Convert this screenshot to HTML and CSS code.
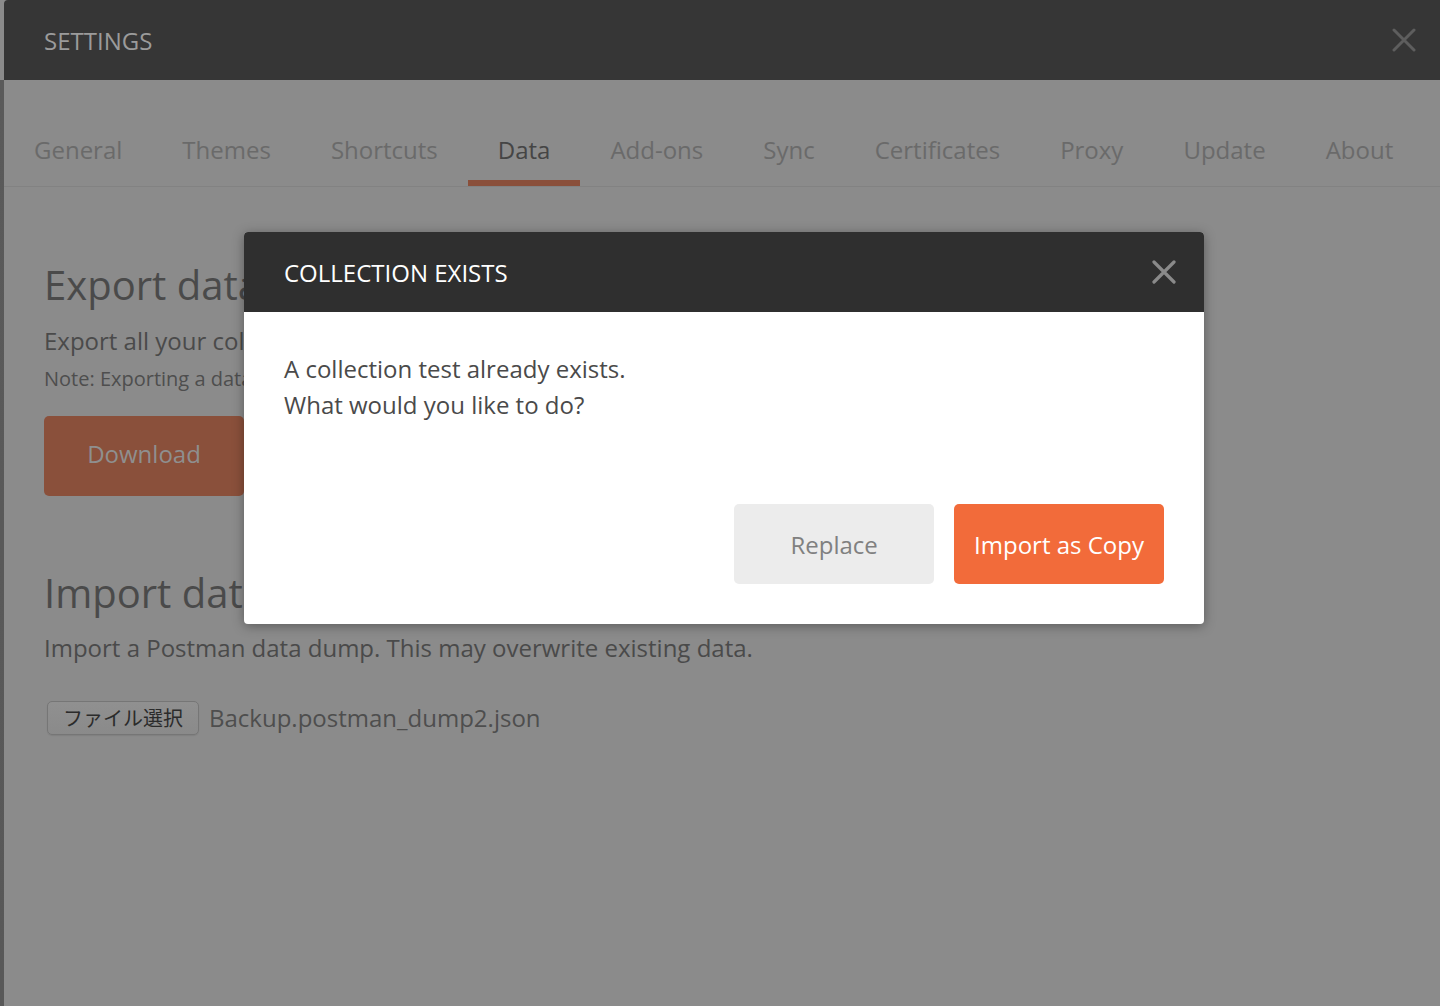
FILE: index.html
```html
<!DOCTYPE html>
<html lang="ja">
<head>
<meta charset="utf-8">
<title>Settings</title>
<link rel="stylesheet" href="styles.css">
</head>
<body>
<div class="app">
  <div class="edge"></div>
  <section class="settings">
    <header class="settings-header">
      <span class="settings-title">SETTINGS</span>
      <svg class="close-icon" width="24" height="24" viewBox="0 0 24 24"><path d="M2 2L22 22M22 2L2 22" stroke="#5e5e5e" stroke-width="3" stroke-linecap="round" fill="none"/></svg>
    </header>
    <nav class="tabs">
      <span class="tab">General</span>
      <span class="tab">Themes</span>
      <span class="tab">Shortcuts</span>
      <span class="tab active">Data</span>
      <span class="tab">Add-ons</span>
      <span class="tab">Sync</span>
      <span class="tab">Certificates</span>
      <span class="tab">Proxy</span>
      <span class="tab">Update</span>
      <span class="tab">About</span>
    </nav>
    <div class="content">
      <h2 class="section-title">Export data</h2>
      <p class="section-text">Export all your collections, environments, globals and header presets to a single file.</p>
      <p class="section-note">Note: Exporting a data dump may take a while depending on the amount of data.</p>
      <div class="dl-btn">Download</div>
      <h2 class="section-title import-title">Import data</h2>
      <p class="section-text import-text">Import a Postman data dump. This may overwrite existing data.</p>
      <div class="file-row">
        <span class="file-btn">ファイル選択</span>
        <span class="file-name">Backup.postman_dump2.json</span>
      </div>
    </div>
  </section>
</div>

<div class="dialog">
  <div class="dialog-header">
    <span class="dialog-title">COLLECTION EXISTS</span>
    <svg class="dialog-close" width="24" height="24" viewBox="0 0 24 24"><path d="M2 2L22 22M22 2L2 22" stroke="#8a8a8a" stroke-width="3.2" stroke-linecap="round" fill="none"/></svg>
  </div>
  <div class="dialog-body">
    <p class="dialog-text">A collection test already exists.<br>What would you like to do?</p>
    <div class="dialog-actions">
      <span class="btn btn-secondary">Replace</span>
      <span class="btn btn-primary">Import as Copy</span>
    </div>
  </div>
</div>
</body>
</html>
```

FILE: styles.css
```css
* { box-sizing: border-box; }
html, body {
  margin: 0;
  padding: 0;
  width: 1440px;
  height: 1006px;
  overflow: hidden;
}
body {
  font-family: "Open Sans", "Noto Sans", sans-serif;
  background: #8b8b8b;
}
.app {
  display: flex;
  height: 1006px;
}
.edge {
  width: 4px;
  flex: none;
  background: linear-gradient(#8b8b8b 0, #8b8b8b 80px, #5a5a5a 80px, #585858 100%);
}
.settings {
  flex: 1;
  background: #8b8b8b;
  display: flex;
  flex-direction: column;
}
.settings-header {
  height: 80px;
  flex: none;
  background: #363636;
  border-top-left-radius: 4px;
  display: flex;
  align-items: center;
  justify-content: space-between;
  padding: 0 24px 0 40px;
}
.settings-title {
  color: #9b9b9b;
  font-size: 24px;
  line-height: 36px;
  margin-top: 2px;
}
.close-icon { display: block; }
.tabs {
  display: flex;
  margin-top: 52px;
  border-bottom: 1px solid #828282;
}
.tab {
  padding: 0 30px 12px;
  font-size: 24px;
  line-height: 36px;
  color: #6a6a6a;
  border-bottom: 6px solid transparent;
}
.tab.active {
  color: #454545;
  border-bottom-color: #8a4f3a;
}
.content {
  padding: 0 40px;
}
.section-title {
  margin: 71px 0 0;
  font-size: 40px;
  line-height: 54px;
  font-weight: 400;
  color: #4a4a4a;
  white-space: nowrap;
}
.section-text {
  margin: 11px 0 0;
  font-size: 24px;
  line-height: 36px;
  color: #4a4a4a;
  white-space: nowrap;
}
.section-note {
  margin: 5px 0 0;
  font-size: 20px;
  line-height: 30px;
  color: #4e4e4e;
  white-space: nowrap;
}
.dl-btn {
  margin-top: 22px;
  width: 200px;
  height: 80px;
  padding-bottom: 4px;
  border-radius: 5px;
  background: #8a503b;
  color: #8f8f8f;
  font-size: 24px;
  line-height: 36px;
  display: flex;
  align-items: center;
  justify-content: center;
}
.import-title { margin-top: 70px; }
.import-text { margin-top: 10px; }
.file-row {
  margin-top: 34px;
  display: flex;
  align-items: center;
  gap: 10px;
  padding-left: 3px;
}
.file-btn {
  height: 34px;
  padding: 0 15px;
  border: 1px solid #767676;
  border-radius: 5px;
  background: linear-gradient(#909090, #8a8a8a);
  box-shadow: 0 1px 1px rgba(0,0,0,0.08);
  font-family: "Noto Sans CJK JP", "Open Sans", sans-serif;
  font-size: 20px;
  line-height: 32px;
  color: #2b2b2b;
}
.file-name {
  font-size: 24px;
  line-height: 36px;
  color: #4e4e4e;
}

.dialog {
  position: absolute;
  left: 244px;
  top: 232px;
  width: 960px;
  background: #fff;
  border-radius: 4px;
  box-shadow: 0 2px 12px rgba(0,0,0,0.35);
  overflow: hidden;
}
.dialog-header {
  height: 80px;
  background: #2f2f2f;
  display: flex;
  align-items: center;
  justify-content: space-between;
  padding: 0 28px 0 40px;
}
.dialog-title {
  color: #ffffff;
  font-size: 24px;
  line-height: 36px;
  margin-top: 2px;
}
.dialog-close { display: block; }
.dialog-body {
  padding: 39px 40px 40px 40px;
}
.dialog-text {
  margin: 0;
  font-size: 24px;
  line-height: 36px;
  color: #4a4a4a;
}
.dialog-actions {
  margin-top: 81px;
  display: flex;
  justify-content: flex-end;
  gap: 20px;
}
.btn {
  height: 80px;
  min-width: 200px;
  padding: 0 20px;
  border-radius: 5px;
  font-size: 24px;
  display: flex;
  align-items: center;
  justify-content: center;
}
.btn-secondary {
  background: #ececec;
  color: #808080;
}
.btn-primary {
  background: #f26b3a;
  color: #ffffff;
}
```
